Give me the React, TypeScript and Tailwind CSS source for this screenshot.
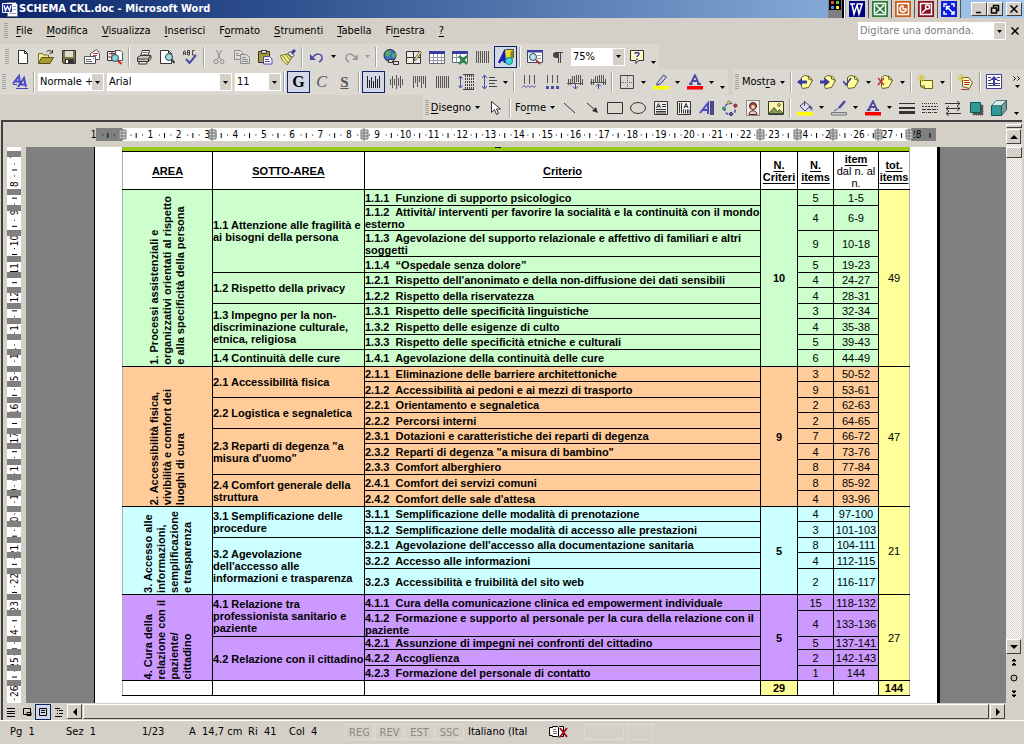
import { Fragment } from "react";
import type { ReactNode } from "react";
import clsx from "clsx";

type Criterion = { text: string; items: string; range: string; h: string; px: number };
type Sub = { label: string; criteria: Criterion[] };
type Area = { label: string; bg: string; count: string; total: string; subs: Sub[] };

// row heights, as a class for the cell and a number for the side ruler
const H = {
  13: "h-[13px]",
  15: "h-[15px]",
  16: "h-[16px]",
  17: "h-[17px]",
  25: "h-[25px]",
  26: "h-[26px]",
};

const c = (text: string, items: string, range: string, px: keyof typeof H): Criterion => ({
  text,
  items,
  range,
  h: H[px],
  px,
});

const AREAS: Area[] = [
  {
    label: "1. Processi assistenziali e\norganizzativi orientati al rispetto\ne alla specificità della persona",
    bg: "bg-[#ccffcc]",
    count: "10",
    total: "49",
    subs: [
      {
        label: "1.1 Attenzione alle fragilità e\nai bisogni della persona",
        criteria: [
          c("1.1.1  Funzione di supporto psicologico", "5", "1-5", 16),
          c("1.1.2  Attività/ interventi per favorire la socialità e la continuità con il mondo\nesterno", "4", "6-9", 25),
          c("1.1.3  Agevolazione del supporto relazionale e affettivo di familiari e altri\nsoggetti", "9", "10-18", 26),
          c("1.1.4  “Ospedale senza dolore”", "5", "19-23", 16),
        ],
      },
      {
        label: "1.2 Rispetto della privacy",
        criteria: [
          c("1.2.1  Rispetto dell'anonimato e della non-diffusione dei dati sensibili", "4", "24-27", 15),
          c("1.2.2  Rispetto della riservatezza", "4", "28-31", 16),
        ],
      },
      {
        label: "1.3 Impegno per la non-\ndiscriminazione culturale,\netnica, religiosa",
        criteria: [
          c("1.3.1  Rispetto delle specificità linguistiche", "3", "32-34", 15),
          c("1.3.2  Rispetto delle esigenze di culto", "4", "35-38", 16),
          c("1.3.3  Rispetto delle specificità etniche e culturali", "5", "39-43", 15),
        ],
      },
      {
        label: "1.4 Continuità delle cure",
        criteria: [c("1.4.1  Agevolazione della continuità delle cure", "6", "44-49", 17)],
      },
    ],
  },
  {
    label: "2. Accessibilità fisica,\nvivibilità e comfort dei\nluoghi di cura",
    bg: "bg-[#ffcc99]",
    count: "9",
    total: "47",
    subs: [
      {
        label: "2.1 Accessibilità fisica",
        criteria: [
          c("2.1.1  Eliminazione delle barriere architettoniche", "3", "50-52", 15),
          c("2.1.2  Accessibilità ai pedoni e ai mezzi di trasporto", "9", "53-61", 16),
        ],
      },
      {
        label: "2.2 Logistica e segnaletica",
        criteria: [
          c("2.2.1  Orientamento e segnaletica", "2", "62-63", 15),
          c("2.2.2  Percorsi interni", "2", "64-65", 16),
        ],
      },
      {
        label: "2.3 Reparti di degenza \"a\nmisura d'uomo\"",
        criteria: [
          c("2.3.1  Dotazioni e caratteristiche dei reparti di degenza", "7", "66-72", 15),
          c("2.3.2  Reparti di degenza \"a misura di bambino\"", "4", "73-76", 16),
          c("2.3.3  Comfort alberghiero", "8", "77-84", 15),
        ],
      },
      {
        label: "2.4 Comfort generale della\nstruttura",
        criteria: [
          c("2.4.1  Comfort dei servizi comuni", "8", "85-92", 16),
          c("2.4.2  Comfort delle sale d'attesa", "4", "93-96", 16),
        ],
      },
    ],
  },
  {
    label: "3. Accesso alle\ninformazioni,\nsemplificazione\ne trasparenza",
    bg: "bg-[#ccffff]",
    count: "5",
    total: "21",
    subs: [
      {
        label: "3.1 Semplificazione delle\nprocedure",
        criteria: [
          c("3.1.1  Semplificazione delle modalità di prenotazione", "4", "97-100", 15),
          c("3.1.2  Semplificazione delle modalità di accesso alle prestazioni", "3", "101-103", 16),
        ],
      },
      {
        label: "3.2 Agevolazione\ndell'accesso alle\ninformazioni e trasparenza",
        criteria: [
          c("3.2.1  Agevolazione dell'accesso alla documentazione sanitaria", "8", "104-111", 15),
          c("3.2.2  Accesso alle informazioni", "4", "112-115", 16),
          c("3.2.3  Accessibilità e fruibilità del sito web", "2", "116-117", 26),
        ],
      },
    ],
  },
  {
    label: "4. Cura della\nrelazione con il\npaziente/\ncittadino",
    bg: "bg-[#cc99ff]",
    count: "5",
    total: "27",
    subs: [
      {
        label: "4.1 Relazione tra\nprofessionista sanitario e\npaziente",
        criteria: [
          c("4.1.1  Cura della comunicazione clinica ed empowerment individuale", "15", "118-132", 16),
          c("4.1.2  Formazione e supporto al personale per la cura della relazione con il\npaziente", "4", "133-136", 26),
        ],
      },
      {
        label: "4.2 Relazione con il cittadino",
        criteria: [
          c("4.2.1  Assunzione di impegni nei confronti del cittadino", "5", "137-141", 13),
          c("4.2.2  Accoglienza", "2", "142-143", 16),
          c("4.2.3  Formazione del personale di contatto", "1", "144", 15),
        ],
      },
    ],
  },
];

/* ---------- icons ---------- */

const Svg = ({ children }: { children: ReactNode }) => (
  <svg viewBox="0 0 16 16" className="size-4 shrink-0" fill="none" stroke="#333" strokeWidth="1" aria-hidden="true">
    {children}
  </svg>
);

const bars = (tops: number[], bottoms: number[], color = "#222") => (
  <Svg>
    <path stroke={color} d={tops.map((t, i) => `M${i * 2 + 1.5} ${t}V${bottoms[i]}`).join("")} />
  </Svg>
);

const ALIGN = {
  start: bars([2, 6, 3, 7, 2, 5, 2], [14, 14, 14, 14, 14, 14, 14]),
  center: bars([5, 2, 5, 1, 4, 2, 5], [11, 14, 11, 15, 12, 14, 11], "#555"),
  end: bars([2, 2, 2, 2, 2, 2, 2], [14, 9, 13, 8, 14, 10, 14], "#555"),
  full: bars([2, 2, 2, 2, 2, 2, 2], [14, 14, 14, 14, 14, 14, 14], "#555"),
};

const NewDoc = <Svg><path fill="#fff" d="M3.5 1.5h6l3 3v10h-9zM9.500 1.500v3h3" /></Svg>;
const OpenDoc = (
  <Svg>
    <path fill="#f5ee8c" stroke="#77702a" d="M.5 14V4.500h4l1 1.500h5v3" />
    <path fill="#a89c2e" stroke="#554f18" d="M.5 14.500l3-6h12l-3.500 6z" />
    <path d="M8.500 3c1.500-2 4-2 5.500 0M14.500 1v3h-3" />
  </Svg>
);
const Save = (
  <Svg>
    <path fill="#7b7b45" d="M1.500 1.500h13v13h-12l-1-1z" />
    <path fill="#dedbd0" stroke="none" d="M4 2h8v6H4z" />
    <path fill="#333" stroke="none" d="M4 10h9v4H4z" />
    <path fill="#fff" stroke="none" d="M5 11h2v3H5z" />
  </Svg>
);
const Mail = (
  <Svg>
    <path fill="#fff" stroke="#555" d="M6.500 4.500l6-4 3 4v6h-9z" />
    <path stroke="#b44" d="M9 4.500h5M9 6.500h4" />
    <path fill="#fff" stroke="#555" d="M.5 7.500h11v7H.5z" />
    <path stroke="#667" d="M2 10.500h5M2 12.500h6M9 9.500h1" />
  </Svg>
);
const FindDoc = (
  <Svg>
    <path fill="#eee" d="M.5 2.500h9v9h-9z" />
    <path stroke="#833" d="M2 4.500h6M.5 8h9M5 2.500v9" />
    <path fill="#fff" stroke="#555" d="M8.500 1.500h5l2 2v8h-7z" />
    <circle cx="8" cy="9" r="3.500" fill="#8cd5da" stroke="#345" />
    <path stroke="#c22" strokeWidth="2" d="M11 12l3.500 3" />
  </Svg>
);
const Print = (
  <Svg>
    <path fill="#fff" d="M4.500 7l2-5.500h7L12 7" />
    <path stroke="#888" d="M7 3.500h5M6.500 5.500h5" />
    <path fill="#c8c5b8" d="M1.500 8.500l3-2h10l-2 3.500h-11zM1.500 8.500v4h11v-3M12.500 12.500l2.500-3v-3" />
    <path fill="#eee" d="M3.500 12.500h8l-1 2.500h-8z" />
    <path stroke="#cb3" d="M9 10.500h2" />
  </Svg>
);
const Preview = (
  <Svg>
    <path fill="#fff" d="M1.500 1.500h8l3 3v10h-11zM9.500 1.500v3h3" />
    <circle cx="10" cy="8" r="3.500" fill="#9fdede" stroke="#344" />
    <path stroke="#344" strokeWidth="2" d="M12.500 10.500l3 3.500" />
  </Svg>
);
const Spell = (
  <Svg>
    <path stroke="#444" d="M1.500 6V3l1-1.500 1 1.500v3M1.500 4.500h2M5.500 1.500V6h2V1.500h-2M5.500 3.500h2M12.500 1.500h-2V6h2" />
    <path stroke="#4b49a8" strokeWidth="2" d="M4 10l3.500 4L14 6" />
  </Svg>
);
const Cut = (
  <Svg>
    <path stroke="#8a8a8a" d="M5.500 1l4 9M10.500 1l-4 9" />
    <circle cx="5" cy="12.500" r="2" stroke="#8a8a8a" />
    <circle cx="11" cy="12.500" r="2" stroke="#8a8a8a" />
  </Svg>
);
const Copy = (
  <Svg>
    <path fill="#ddd" stroke="#8a8a8a" d="M.5 1.500h6l2 2v7h-8z" />
    <path fill="#ddd" stroke="#8a8a8a" d="M6.500 5.500h6l3 3v6h-9zM8 8.500h4M8 10.500h6M8 12.500h6M2 4.500h3M2 6.500h4" />
  </Svg>
);
const Paste = (
  <Svg>
    <path fill="#a99b35" d="M1.500 2.500h11v11h-11z" />
    <path fill="#ddd" d="M4.500 1.500h5v3h-5z" />
    <path fill="#fff" stroke="#4b49a8" d="M6.500 7.500h6l2.500 2.500v5H6.500zM8 10.500h4M8 12.500h5" />
  </Svg>
);
const Brush = (
  <Svg>
    <path fill="#f5ee8c" stroke="#77702a" d="M.5 6.500l7-1.500 4 4-4 6.500c-3-1-5-3-7-9z" />
    <path stroke="#77702a" d="M3 7l5 7M6 6l4 5" />
    <path fill="#f4f4f4" d="M8 4.500l2-2 4 4-2 2z" />
    <path stroke="#3c3aa0" strokeWidth="3" d="M12 4l3-3" />
  </Svg>
);
const Undo = <Svg><path stroke="#4b49a8" strokeWidth="1.500" d="M4 8c3-4 9-4 9 1 0 2-1 3-3 4" /><path fill="#4b49a8" stroke="none" d="M1 5v6h6z" /></Svg>;
const Redo = <Svg><path stroke="#999" strokeWidth="1.500" d="M12 8C9 4 3 4 3 9c0 2 1 3 3 4" /><path fill="#999" stroke="none" d="M15 5v6H9z" /></Svg>;
const Web = (
  <Svg>
    <circle cx="7" cy="6.500" r="6" fill="#3b73c9" stroke="#224" />
    <path fill="#59ae58" stroke="none" d="M3 3l4-2 1 3-3 4-3-2zM9 5l4-1-1 5-3-1z" />
    <path fill="#ddd" d="M5.500 10.500h5v3h-5zM10.500 12.500h5v3h-5zM9 12.500h4" />
  </Svg>
);
const Tables = (
  <Svg>
    <path fill="#eceae2" d="M.5 2.500h14v12H.5zM7.500 2.500v12M.5 8.500h14" />
    <path fill="#f3e38c" stroke="#665" d="M8 12l1-3 5-7 1.500 1.500-5 7z" />
  </Svg>
);
const InsTable = (
  <Svg>
    <path fill="#fff" stroke="#667" d="M.5 2.500h15v12H.5z" />
    <path fill="#3c3aa0" stroke="none" d="M0 2h16v3H0z" />
    <path stroke="#99a" d="M1 8.500h14M1 11.500h14M4.500 5v9M8.500 5v9M12.500 5v9" />
  </Svg>
);
const InsExcel = (
  <Svg>
    <path fill="#fff" stroke="#667" d="M.5 2.500h15v11H.5z" />
    <path fill="#3c3aa0" stroke="none" d="M0 2h16v3H0z" />
    <path stroke="#99a" d="M1 8.500h14M4.500 5v8M8.500 5v8" />
    <path stroke="#2d8a48" strokeWidth="2.500" d="M7 7l8 8M15 7l-8 8" />
  </Svg>
);
const Drawing = (
  <Svg>
    <path fill="#e9d832" stroke="#443" d="M5.500 2.500l3-2h7v8l-3 2h-7z" />
    <path fill="#8c8418" stroke="none" d="M12.500 3l3-2v7l-3 2z" />
    <path stroke="#1b1bb5" strokeWidth="2.500" d="M1 14L6 4l1 10M3 11h4" />
    <circle cx="11" cy="12" r="3.500" fill="#3fd6db" stroke="#188" />
  </Svg>
);
const MapLens = (
  <Svg>
    <path fill="#fff" stroke="#446" d="M.5 1.500h15v12H.5z" />
    <path fill="#3c3aa0" stroke="none" d="M0 1h16v2.500H0z" />
    <path stroke="#99a" d="M10 6.500h4M10 9.500h4" />
    <circle cx="6" cy="8" r="3.500" fill="#b6e6ea" stroke="#345" />
    <path stroke="#a33" strokeWidth="2" d="M9 11l4 4" />
  </Svg>
);
const Pilcrow = <Svg><path fill="#444" stroke="none" d="M8 3H6a3 3 0 000 6h2z" /><path stroke="#444" d="M8.500 3v11M10.500 3v11M7 3.500h6" /></Svg>;
const Help = (
  <Svg>
    <path fill="#ffffc4" d="M1.500 1.500h13v10h-5L7 14.500v-3H1.500z" />
    <path stroke="#3c3aa0" strokeWidth="1.500" d="M6 5c0-2 4-2 4 0 0 1.500-2 1.500-2 3M8 9.500V11" />
  </Svg>
);
const Styles = (
  <Svg>
    <path stroke="#4b49c8" strokeWidth="2" d="M1 9.500L7 2l1 8M3 7.500h4M6 13l6-9 2 9M8.500 10.500H13" />
    <path stroke="#4b49a8" d="M1 10.500h4M4 14.500h12" />
  </Svg>
);
const Spread = (
  <Svg>
    <path stroke="#444" d="M7.500 1v14M9.500 1v14M11.500 1v14M13.500 1v14M15.500 1v14" strokeDasharray="2 1" />
    <path stroke="#4b49a8" d="M2.500 2v12M.5 4.500L2.500 2l2 2.500M.5 11.500l2 2.500 2-2.500" />
    <path stroke="#444" d="M5 .5h11M5 15.500h11" />
  </Svg>
);
const Spacing = <Svg><path stroke="#4b49a8" d="M3.500 1v14M1 4l2.500-3L6 4M1 12l2.500 3L6 12" /><path stroke="#444" d="M8 3.500h6M8 6.500h8M8 9.500h6M8 12.500h8" /></Svg>;
const Numbering = <Svg><path stroke="#555" d="M3.500 1v9M8.500 1v9M13.500 1v9" /><path stroke="#4b49a8" d="M1 13.500l2-2 2 2 2-2 2 2 2-2 2 2 2-2" /></Svg>;
const Bullets = <Svg><path stroke="#555" d="M3.500 1v8M8.500 1v8M13.500 1v8" /><path fill="#4b49a8" stroke="none" d="M2 12h3v3H2zM7 12h3v3H7zM12 12h3v3h-3z" /></Svg>;
const Outdent = <Svg><path stroke="#555" d="M1.500 5v6M3.500 5v6M5.500 2v8M7.500 2v8M9.500 1v7M11.500 1v7M13.500 1v10M15.500 5v6M0 9.500h16" /><path stroke="#4b49a8" d="M8.500 10v5M6 12.500l2.500 2.500 2.500-2.500" /></Svg>;
const Indent = <Svg><path stroke="#555" d="M1.500 5v6M3.500 5v6M5.500 2v6M7.500 2v6M9.500 1v7M11.500 1v7M13.500 1v10M15.500 5v6M0 8.500h16" /><path stroke="#4b49a8" d="M8.500 10v5M6 12.500L8.500 10l2.500 2.500" /></Svg>;
const Borders = <Svg><path stroke="#444" d="M1.500 1.500h13v13h-13z" /><path stroke="#666" strokeDasharray="1 1" d="M8.500 2v12M2 8.500h12" /></Svg>;
const Highlight = (
  <Svg>
    <path fill="#c5c8e8" stroke="#446" d="M4.500 8.500l6-7.500 3 2-6 7-4 1z" />
    <path fill="#ff0" stroke="none" d="M0 12h16v3.500H0z" />
  </Svg>
);
const FontColor = <Svg><path stroke="#4b49a8" strokeWidth="1.800" d="M3.500 10L8 1l4 9M5 7h6M2 10h3.500M10 10h4" /><path fill="#f00" stroke="none" d="M0 12h16v3.500H0z" /></Svg>;

const Note = ({ mark }: { mark: ReactNode }) => (
  <Svg>
    <path fill="#ffff9c" stroke="#665f20" d="M4.500 3.500l3-2 5 1 3 4-4 7-6 1-1-2z" />
    <path stroke="#665f20" d="M11.500 2v3l4 1.500" />
    {mark}
  </Svg>
);
const Prev = <Note mark={<path fill="#3c3aa0" stroke="none" d="M0 8l5-4v2.500h5v3H5V12z" />} />;
const Next = <Note mark={<path fill="#3c3aa0" stroke="none" d="M10 8L5 4v2.500H0v3h5V12z" />} />;
const Accept = <Note mark={<path stroke="#3c3aa0" strokeWidth="1.500" d="M0 7l3 4 5-7" />} />;
const Reject = <Note mark={<path stroke="#b33" strokeWidth="1.500" d="M1 4l6 7M7 4l-6 7" />} />;
const AddNote = (
  <Svg>
    <path fill="#ffff9c" stroke="#665f20" d="M3.500 6.500h12v8h-8l-4-2z" />
    <path stroke="#665f20" d="M3.500 12h4v2.500" />
    <path stroke="#d6c53a" d="M4.500 0v8M0 4h9M2 1l5 6M7 1L2 7" />
  </Svg>
);
const Track = (
  <Svg>
    <path fill="#ffffc4" stroke="#665f20" d="M5.500 3.500h6l4 5-3 6-7-2z" />
    <path stroke="#b33" d="M7 6.500h5M7 8.500h6M7 10.500h5M4 15.500h8" />
    <path stroke="#d6c53a" d="M4 0v8M0 4h8M1 1l6 6M7 1L1 7" />
  </Svg>
);
const Pane = (
  <Svg>
    <path fill="#fff" stroke="#3c3aa0" d="M.5.5h15v14H.5z" />
    <path stroke="#446" d="M2 9.500h12M2 11.500h12M2 3.500h3M11 3.500h3M2 6.500h3M11 6.500h3" />
    <path fill="#3c3aa0" stroke="none" d="M8 2l4 4H9v5H7V6H4z" />
  </Svg>
);

const Cursor = <Svg><path fill="#fff" d="M3.500 1.500v11l3-3 2 5 2-1-2-4.500h4z" /></Svg>;
const Line = <Svg><path d="M3 3l11 10" /></Svg>;
const ArrowLine = <Svg><path d="M3 3l8 7" /><path fill="#333" stroke="none" d="M14 13l-6-2 4-4z" /></Svg>;
const Rect = <Svg><path d="M.5 2.500h15v11H.5z" /></Svg>;
const Oval = <Svg><ellipse cx="8" cy="8" rx="7.500" ry="5.500" /></Svg>;
const TextBox = <Svg><path fill="#eee" d="M1.500 1.500h13v13h-13z" /><path d="M3.500 8l2-4.500 2 4.500M4 6.500h3M9 4.500h4M9 6.500h4M3 9.500h10M3 11.500h10M3 13h10" /></Svg>;
const VTextBox = <Svg><path fill="#eee" d="M1.500 1.500h13v13h-13z" /><path d="M3.500 3v10M5.500 3v10M8 8l2-4.500 2 4.500M8.500 6.500h3M7.500 9.500v4M9.500 9.500v4M11.500 9.500v4M13 9.500v4" /></Svg>;
const WordArt = <Svg><path stroke="#4b49c8" strokeWidth="2" d="M1 13L9 3v11M4 10h5" /><path fill="#4b49a8" stroke="#446" d="M11.500 1.500h3v13h-3z" /></Svg>;
const Diagram = (
  <Svg>
    <path stroke="#4b49a8" strokeWidth="1.500" strokeDasharray="3 2" d="M3 11C2 6 5 3 8 3s6 3 5 8-8 5-10 0z" />
    <circle cx="7" cy="2.500" r="1.500" fill="#e8d850" stroke="#775" />
    <circle cx="13.500" cy="5.500" r="1.500" fill="#c33" stroke="#722" />
    <circle cx="2" cy="8.500" r="1.500" fill="#4b8" stroke="#264" />
    <circle cx="9" cy="14" r="1.500" fill="#56c" stroke="#336" />
  </Svg>
);
const Clip = (
  <Svg>
    <path fill="#f2efe8" strokeDasharray="1 1" d="M1.500.5h13v15h-13z" />
    <circle cx="8" cy="6" r="3.500" fill="#9a4a3a" stroke="#522" />
    <circle cx="8" cy="7" r="2" fill="#f2d3bd" stroke="none" />
    <path fill="#e9c9c2" stroke="#522" d="M4 14.500c0-5 8-5 8 0z" />
  </Svg>
);
const Picture = (
  <Svg>
    <path fill="#fcf7b0" d="M.5 1.500h15v13H.5z" />
    <circle cx="11" cy="5" r="1.500" fill="#d8b830" stroke="#885" />
    <path fill="#7f9f50" stroke="#553" d="M1 13.500l5-6 3.500 4 2-2 3.500 4z" />
  </Svg>
);
const Bucket = (
  <Svg>
    <path fill="#dfe4f4" stroke="#446" d="M3 6l5-4 5 4-5 5z" />
    <path stroke="#446" d="M7.500 6V1" />
    <path fill="#4b49a8" stroke="none" d="M12 5c3 1 4 3 3 6-1-2-2-3-3-3z" />
    <path fill="#ff0" stroke="none" d="M0 12h16v3.500H0z" />
  </Svg>
);
const LineColor = (
  <Svg>
    <path stroke="#4b49a8" strokeWidth="2.500" d="M8 8l6-7" />
    <path stroke="#446" d="M3 10.500c2 0 3-1 5-3" />
    <path fill="#ccc" stroke="#777" d="M.5 12.500h15v2.500H.5z" />
  </Svg>
);
const Lines = <Svg><path d="M0 3.500h16" /><path strokeWidth="2" d="M0 8h16" /><path strokeWidth="3" d="M0 12.500h16" /></Svg>;
const Dashes = <Svg><path strokeDasharray="1 1" d="M0 3.500h16" /><path strokeDasharray="2 1" d="M0 6.500h16" /><path strokeDasharray="4 1" d="M0 9.500h16" /><path strokeDasharray="3 1 1 1" d="M0 12.500h16" /></Svg>;
const Arrows = <Svg><path d="M0 3.500h15M12 1l3 2.500L12 6M1 8.500h14M4 6L1 8.500 4 11M12 6l3 2.500-3 2.500M1 13.500h15M4 11l-3 2.500L4 16" /></Svg>;
const Shadow = <Svg><path fill="#555" stroke="#555" strokeDasharray="1 1" d="M5 5h10v10H5z" /><path fill="#2f9a98" stroke="#155" d="M2.500 2.500h10v10h-10z" /></Svg>;
const Cube = (
  <Svg>
    <path fill="#2f9a98" stroke="#155" d="M.5 5.500h10v10H.5z" />
    <path fill="#d5f0ee" stroke="#577" d="M.5 5.500l5-5h10l-5 5z" />
    <path fill="#7b9e9d" stroke="#355" d="M10.500 5.500l5-5v9l-5 6z" />
  </Svg>
);

/* ---------- toolbar parts ---------- */

const Caret = ({ className }: { className?: string }) => (
  <svg viewBox="0 0 5 3" className={clsx("h-[3px] w-[5px] shrink-0", className)} aria-hidden="true">
    <path d="M0 0h5L2.500 3z" fill="currentColor" />
  </svg>
);

const Btn = ({ label, on, children }: { label: string; on?: boolean; children: ReactNode }) => (
  <button
    aria-label={label}
    className={clsx(
      "flex h-[22px] w-[23px] shrink-0 items-center justify-center",
      on && "border border-[#0a246a] bg-[#d3d8e6]",
    )}
  >
    {children}
  </button>
);

const Drop = ({ label, low, off }: { label: string; low?: boolean; off?: boolean }) => (
  <button
    aria-label={label}
    className={clsx("flex h-[22px] w-[11px] shrink-0 justify-center", low ? "items-end pb-1" : "items-center", off && "text-[#999]")}
  >
    <Caret />
  </button>
);

const Sep = () => <div className="mx-[2px] h-[20px] w-[2px] shrink-0 border-l border-[#a6a39b] bg-white" />;

const Grip = () => (
  <div className="mx-[2px] h-[16px] w-[4px] shrink-0 bg-[repeating-linear-gradient(#a6a39b_0_1px,transparent_1px_2px)]" />
);

const Combo = ({ label, value, width }: { label: string; value: string; width: string }) => (
  <div className={clsx("flex h-[18px] shrink-0 items-center bg-white pr-px", width)}>
    <select aria-label={label} className="h-full min-w-0 flex-1 appearance-none pl-[2px] text-[11px] leading-[16px]">
      <option>{value}</option>
    </select>
    <span className="flex h-[16px] w-[11px] items-center justify-center bg-[#d4d0c8]">
      <Caret />
    </span>
  </div>
);

/* ---------- title and menu ---------- */

const Shortcut = ({ label, bg, children }: { label: string; bg: string; children: ReactNode }) => (
  <button aria-label={label} className="flex h-full w-[23px] items-center justify-center border-r border-[#555] bg-[#d4d0c8]">
    <span className={clsx("flex size-4 items-center justify-center", bg)}>
      <svg viewBox="0 0 16 16" className="size-4" fill="none" stroke="#fff" strokeWidth="1.500" aria-hidden="true">
        {children}
      </svg>
    </span>
  </button>
);

const WinBtn = ({ label, d }: { label: string; d: string }) => (
  <button
    aria-label={label}
    className="flex h-[14px] w-[16px] items-center justify-center border border-t-white border-l-white border-r-[#404040] border-b-[#404040] bg-[#d4d0c8]"
  >
    <svg viewBox="0 0 10 10" className="size-[10px]" fill="none" stroke="#000" strokeWidth="1.500" aria-hidden="true">
      <path d={d} />
    </svg>
  </button>
);

const TitleBar = () => (
  <header className="flex h-[18px] items-center bg-linear-to-r from-[#0a246a] to-[#a6caf0] pr-[2px] pl-[2px]">
    <svg viewBox="0 0 16 16" className="size-4" aria-hidden="true">
      <path fill="#fff" stroke="#777" d="M5.500 1.500h8l2 2v12h-10z" />
      <path stroke="#99b" d="M11 5.500h3M11 8.500h3M7 12.500h7" />
      <path fill="#22319c" stroke="#fff" d="M.5 2.500h10v9H.5z" />
      <path fill="none" stroke="#fff" strokeWidth="1.300" d="M2 4.500l1.500 5 2-4 2 4 1.500-5" />
    </svg>
    <h1 className="ml-px flex-1 font-bold text-white">SCHEMA CKL.doc - Microsoft Word</h1>
    <div className="mr-[10px] flex h-full">
      <div className="w-[14px] bg-[#808080]">
        <svg viewBox="0 0 12 10" className="ml-px h-[10px] w-[12px]" aria-hidden="true">
          <path fill="#000" d="M0 0h12v10H0z" />
          <path fill="#e44" d="M2 1h3v3H2z" />
          <path fill="#4c4" d="M7 1h3v3H7z" />
          <path fill="#48f" d="M2 6h3v3H2z" />
          <path fill="#fd3" d="M7 6h3v3H7z" />
        </svg>
      </div>
      <div className="mr-px w-[3px] border-r border-white bg-black" />
      <Shortcut label="Word" bg="bg-[#000080]"><path d="M1 3h5M8 3h6M3 3l2 10 3-9 2 9 3-10" /></Shortcut>
      <Shortcut label="Excel" bg="bg-[#2d7d3e]"><path d="M2.500 2.500h11v11h-11zM4 4l8 8M12 4l-8 8" /></Shortcut>
      <Shortcut label="PowerPoint" bg="bg-[#cf5a1c]"><path d="M2.500 2.500h11v11h-11z" /><path d="M11 8a3 3 0 11-3-3v3z" /></Shortcut>
      <Shortcut label="Access" bg="bg-[#8a1020]"><path d="M2.500 2.500h11v11h-11z" /><circle cx="9.500" cy="6" r="2" /><path d="M8 8l-4 4" /></Shortcut>
      <Shortcut label="Schermo intero" bg="bg-[#0b1fe0]"><path d="M3 6V3h3M10 13h3v-3M3 10v3h3M10 3h3v3M6 6l6 6M5.500 9V5.500H9" /></Shortcut>
    </div>
    <div className="flex">
      <WinBtn label="Riduci a icona" d="M2 8.500h5" />
      <WinBtn label="Ripristina" d="M3.500 3.500v-2h5v5h-2M1.500 4h5v5h-5z" />
    </div>
    <div className="ml-[3px]">
      <WinBtn label="Chiudi" d="M1.500 1.500l7 7M8.500 1.500l-7 7" />
    </div>
  </header>
);

const MENU: [string, string, string][] = [
  ["", "F", "ile"],
  ["", "M", "odifica"],
  ["", "V", "isualizza"],
  ["", "I", "nserisci"],
  ["F", "o", "rmato"],
  ["", "S", "trumenti"],
  ["", "T", "abella"],
  ["Fi", "n", "estra"],
  ["", "?", ""],
];

const MenuBar = () => (
  <nav className="flex h-[26px] items-center pr-[4px] pl-[2px]">
    <Grip />
    <div className="ml-[6px] flex flex-1 gap-[14px]">
      {MENU.map(([a, key, b]) => (
        <button key={a + key + b}>
          {a}
          <u className="underline-offset-2">{key}</u>
          {b}
        </button>
      ))}
    </div>
    <div className="flex h-[18px] w-[148px] items-center bg-white pr-px">
      <input
        aria-label="Digitare una domanda"
        placeholder="Digitare una domanda."
        className="min-w-0 flex-1 pl-[2px] text-[11px] placeholder:text-[#808080]"
      />
      <button aria-label="Domande recenti" className="flex h-[16px] w-[11px] items-center justify-center bg-[#d4d0c8]">
        <Caret />
      </button>
    </div>
    <button aria-label="Chiudi documento" className="ml-[4px] flex size-[10px] items-center justify-center">
      <svg viewBox="0 0 8 8" className="size-2" stroke="#000" strokeWidth="1.500" aria-hidden="true">
        <path d="M.5.5l7 7M7.500.5l-7 7" />
      </svg>
    </button>
  </nav>
);

const StandardBar = () => (
  <div className="flex h-[25px] items-center self-start bg-[#dbd8d1] pl-[3px]">
    <Grip />
    <Btn label="Nuovo">{NewDoc}</Btn>
    <Btn label="Apri">{OpenDoc}</Btn>
    <Btn label="Salva">{Save}</Btn>
    <Btn label="Posta elettronica">{Mail}</Btn>
    <Btn label="Cerca">{FindDoc}</Btn>
    <Sep />
    <Btn label="Stampa">{Print}</Btn>
    <Btn label="Anteprima">{Preview}</Btn>
    <Btn label="Controllo ortografia">{Spell}</Btn>
    <Sep />
    <Btn label="Taglia">{Cut}</Btn>
    <Btn label="Copia">{Copy}</Btn>
    <Btn label="Incolla">{Paste}</Btn>
    <Btn label="Copia formato">{Brush}</Btn>
    <Sep />
    <Btn label="Annulla">{Undo}</Btn>
    <Drop label="Elenco annulla" />
    <Btn label="Ripristina">{Redo}</Btn>
    <Drop label="Elenco ripristina" off />
    <Sep />
    <Btn label="Collegamento">{Web}</Btn>
    <Btn label="Tabelle e bordi">{Tables}</Btn>
    <Btn label="Inserisci tabella">{InsTable}</Btn>
    <Btn label="Foglio di lavoro">{InsExcel}</Btn>
    <Btn label="Colonne">{ALIGN.full}</Btn>
    <Btn label="Disegno" on>{Drawing}</Btn>
    <Sep />
    <Btn label="Mappa documento">{MapLens}</Btn>
    <Btn label="Mostra/Nascondi">{Pilcrow}</Btn>
    <div className="ml-[2px]">
      <Combo label="Zoom" value="75%" width="w-[54px]" />
    </div>
    <Btn label="Guida">{Help}</Btn>
    <Drop label="Opzioni barra Standard" low />
  </div>
);

const FormatBar = () => (
  <div className="flex h-[26px] items-center bg-[#dbd8d1]">
    <Grip />
    <Btn label="Stili e formattazione">{Styles}</Btn>
    <Sep />
    <div className="ml-px flex gap-[3px]">
      <Combo label="Stile" value="Normale +" width="w-[66px]" />
      <Combo label="Tipo di carattere" value="Arial" width="w-[125px]" />
      <Combo label="Dimensione" value="11" width="w-[46px]" />
    </div>
    <Sep />
    <Btn label="Grassetto" on>
      <span className="font-['Liberation_Serif',serif] text-[16px] leading-4 font-bold">G</span>
    </Btn>
    <Btn label="Corsivo">
      <span className="font-['Liberation_Serif',serif] text-[16px] leading-4 text-[#555] italic">C</span>
    </Btn>
    <Btn label="Sottolineato">
      <span className="font-['Liberation_Serif',serif] text-[15px] leading-4 font-bold text-[#555] underline">S</span>
    </Btn>
    <Sep />
    <Btn label="Allinea in basso" on>{ALIGN.start}</Btn>
    <Btn label="Centra">{ALIGN.center}</Btn>
    <Btn label="Allinea in alto">{ALIGN.end}</Btn>
    <Btn label="Giustifica">{ALIGN.full}</Btn>
    <Btn label="Distribuisci">{Spread}</Btn>
    <Btn label="Interlinea">{Spacing}</Btn>
    <Drop label="Valori interlinea" />
    <Sep />
    <Btn label="Elenco numerato">{Numbering}</Btn>
    <Btn label="Elenco puntato">{Bullets}</Btn>
    <Btn label="Riduci rientro">{Outdent}</Btn>
    <Btn label="Aumenta rientro">{Indent}</Btn>
    <Sep />
    <Btn label="Bordi">{Borders}</Btn>
    <Drop label="Tipi di bordo" />
    <Btn label="Evidenzia">{Highlight}</Btn>
    <Drop label="Colori evidenziatore" />
    <Btn label="Colore carattere">{FontColor}</Btn>
    <Drop label="Colori carattere" />
    <Drop label="Opzioni barra Formattazione" low />
    <div className="w-[5px] self-stretch bg-[#d4d0c8]" />
    <Grip />
    <button className="ml-px flex items-center gap-[4px]">
      <span>
        Most<u className="underline-offset-2">r</u>a
      </span>
      <Caret />
    </button>
    <div className="ml-[3px]">
      <Sep />
    </div>
    <Btn label="Precedente">{Prev}</Btn>
    <Btn label="Successiva">{Next}</Btn>
    <Btn label="Accetta">{Accept}</Btn>
    <Drop label="Opzioni accetta" />
    <Btn label="Rifiuta">{Reject}</Btn>
    <Drop label="Opzioni rifiuta" />
    <Sep />
    <Btn label="Inserisci commento">{AddNote}</Btn>
    <Drop label="Opzioni commento" />
    <Sep />
    <Btn label="Revisioni">{Track}</Btn>
    <Sep />
    <Btn label="Riquadro revisioni">{Pane}</Btn>
    <button aria-label="Altri pulsanti" className="ml-auto flex h-[22px] w-[14px] shrink-0 flex-col items-center justify-center gap-[4px]">
      <svg viewBox="0 0 8 5" className="h-[5px] w-2" fill="none" stroke="#000" aria-hidden="true">
        <path d="M.5.5l2 2-2 2M4.500.5l2 2-2 2" />
      </svg>
      <Caret />
    </button>
  </div>
);

const DrawBar = () => (
  <div className="flex h-[25px] items-center self-end bg-[#dbd8d1]">
    <Grip />
    <button className="flex items-center gap-[4px]">
      <span>
        <u className="underline-offset-2">D</u>isegno
      </span>
      <Caret />
    </button>
    <div className="ml-[4px] flex items-center">
      <Btn label="Seleziona oggetti">{Cursor}</Btn>
      <Sep />
    </div>
    <button className="mr-[2px] ml-[2px] flex items-center gap-[4px]">
      <span>
        Fo<u className="underline-offset-2">r</u>me
      </span>
      <Caret />
    </button>
    <Btn label="Linea">{Line}</Btn>
    <Btn label="Freccia">{ArrowLine}</Btn>
    <Btn label="Rettangolo">{Rect}</Btn>
    <Btn label="Ovale">{Oval}</Btn>
    <Btn label="Casella di testo">{TextBox}</Btn>
    <Btn label="Testo verticale">{VTextBox}</Btn>
    <Btn label="WordArt">{WordArt}</Btn>
    <Btn label="Diagramma">{Diagram}</Btn>
    <Btn label="ClipArt">{Clip}</Btn>
    <Btn label="Immagine">{Picture}</Btn>
    <Sep />
    <Btn label="Colore riempimento">{Bucket}</Btn>
    <Drop label="Colori riempimento" />
    <Btn label="Colore linea">{LineColor}</Btn>
    <Drop label="Colori linea" />
    <Btn label="Colore testo">{FontColor}</Btn>
    <Drop label="Colori testo" />
    <Btn label="Stile linea">{Lines}</Btn>
    <Btn label="Stile tratteggio">{Dashes}</Btn>
    <Btn label="Stile freccia">{Arrows}</Btn>
    <Btn label="Ombreggiatura">{Shadow}</Btn>
    <Btn label="3D">{Cube}</Btn>
    <div className="mr-[2px] ml-px">
      <Drop label="Opzioni barra Disegno" low />
    </div>
  </div>
);

/* ---------- rulers ---------- */

const CM = 28.35;
const COLS = [28, 118, 270, 666, 703, 739, 784, 815];

const TopRuler = () => (
  <div className="flex h-[25px] items-center justify-center pl-[25px]">
    <svg viewBox="0 0 846 14" className="h-[14px] w-[846px] shrink-0 overflow-visible text-[10px]" aria-hidden="true">
      <path fill="#808080" d="M2 0h840v13H2z" />
      <path fill="#fff" d="M28 0h789v13H28z" />
      {Array.from({ length: 30 }, (_, n) => {
        const x = 28 + (n - 1) * CM;
        return (
          <Fragment key={n}>
            {n !== 1 && (
              <text x={x} y="10" textAnchor="middle">
                {Math.abs(n - 1)}
              </text>
            )}
            <path d={`M${x + CM / 2} 5v5`} stroke="#000" />
            {n < 29 && <path d={`M${x + 8.500} 7h1M${x + 20} 7h1`} stroke="#000" />}
          </Fragment>
        );
      })}
      {COLS.map((x) => (
        <path key={x} d={`M${x - 3} 2h7v9h-7zM${x} 0v13M${x - 3} 5h7M${x - 3} 8h7`} fill="#ccc" stroke="#777" />
      ))}
    </svg>
  </div>
);

const ROWS = [38, ...AREAS.flatMap((a) => a.subs.flatMap((s) => s.criteria.map((r) => r.px))), 15];
const LINES = ROWS.reduce<number[]>((ys, h) => [...ys, ys[ys.length - 1] + h], [4]);

const SideRuler = () => (
  <svg className="ml-[4px] h-full w-[14px] shrink-0 bg-white text-[10px]" aria-hidden="true">
    {Array.from({ length: 20 }, (_, i) => {
      const y = 9 + i * 28.17;
      return (
        <Fragment key={i}>
          <text transform={`translate(11 ${y}) rotate(-90)`} textAnchor="middle">
            {i + 7}
          </text>
          <path d={`M5 ${y + 14}h5M7 ${y + 8}h1M7 ${y + 20}h1`} stroke="#000" />
        </Fragment>
      );
    })}
    {LINES.slice(0, -1).map((y) => (
      <rect key={y} x="0" y={y} width="14" height="6" fill="#808080" />
    ))}
  </svg>
);

/* ---------- document ---------- */

const AreaRows = ({ area }: { area: Area }) => {
  const span = area.subs.reduce((n, s) => n + s.criteria.length, 0);
  return (
    <tbody className={area.bg}>
      {area.subs.map((sub, si) =>
        sub.criteria.map((row, ri) => {
          const first = si === 0 && ri === 0;
          return (
            <tr key={row.text}>
              {first && (
                <th rowSpan={span} scope="rowgroup" className="border border-black border-l-[#b0b0b0] p-0 pb-px align-bottom">
                  <div className="flex justify-center">
                    <span className="rotate-180 text-left leading-[13px] whitespace-pre [writing-mode:vertical-rl]">
                      {area.label}
                    </span>
                  </div>
                </th>
              )}
              {ri === 0 && (
                <th rowSpan={sub.criteria.length} className="border border-black p-0 text-left whitespace-pre">
                  {sub.label}
                </th>
              )}
              <td className={clsx("border border-black p-0 font-bold whitespace-pre", row.h)}>{row.text}</td>
              {first && (
                <td rowSpan={span} className="border border-black p-0 text-center font-bold">
                  {area.count}
                </td>
              )}
              <td className="border border-black p-0 text-center">{row.items}</td>
              <td className="border border-black p-0 text-center">{row.range}</td>
              {first && (
                <td rowSpan={span} className="border border-black border-r-[#b0b0b0] bg-[#ffff99] p-0 text-center">
                  {area.total}
                </td>
              )}
            </tr>
          );
        }),
      )}
    </tbody>
  );
};

const HEAD = "border border-black p-0 underline underline-offset-2";

const Page = () => (
  <div className="w-[846px] shrink-0 border-r-[3px] border-l border-black bg-white pl-[27px]">
    <div className="h-[4px] w-[788px] bg-[#99cc1a] pl-[373px]">
      <div className="h-px w-[6px] bg-black" />
    </div>
    <table className="w-[788px] table-fixed border-collapse font-['Liberation_Sans',Arial,sans-serif] text-[11px] leading-[12px]">
      <colgroup>
        <col className="w-[90px]" />
        <col className="w-[152px]" />
        <col />
        <col className="w-[37px]" />
        <col className="w-[36px]" />
        <col className="w-[45px]" />
        <col className="w-[31px]" />
      </colgroup>
      <thead>
        <tr className="h-[38px]">
          <th className={clsx(HEAD, "border-l-[#b0b0b0]")}>AREA</th>
          <th className={HEAD}>SOTTO-AREA</th>
          <th className={HEAD}>Criterio</th>
          <th className={HEAD}>N. Criteri</th>
          <th className={HEAD}>N. items</th>
          <th className="border border-black p-0">
            <span className="underline underline-offset-2">item</span>
            <br />
            <span className="font-normal">dal n. al n.</span>
          </th>
          <th className={clsx(HEAD, "border-r-[#b0b0b0]")}>tot. items</th>
        </tr>
      </thead>
      {AREAS.map((area) => (
        <AreaRows key={area.label} area={area} />
      ))}
      <tfoot>
        <tr className="h-[15px] text-center font-bold">
          <td className="border border-black border-l-[#b0b0b0] p-0" />
          <td className="border border-black p-0" />
          <td className="border border-black p-0" />
          <td className="border border-black bg-[#ffff99] p-0">29</td>
          <td className="border border-black p-0" />
          <td className="border border-black p-0" />
          <td className="border border-black border-r-[#b0b0b0] bg-[#ffff99] p-0">144</td>
        </tr>
      </tfoot>
    </table>
  </div>
);

const RAISED = "border border-t-white border-l-white border-r-[#404040] border-b-[#404040] bg-[#d4d0c8]";

const ScrollBtn = ({ label, d }: { label: string; d: string }) => (
  <button aria-label={label} className={clsx("flex size-[15px] shrink-0 items-center justify-center", RAISED)}>
    <svg viewBox="0 0 8 8" className="size-2" aria-hidden="true">
      <path d={d} />
    </svg>
  </button>
);

const PlainBtn = ({ label, children }: { label: string; children: ReactNode }) => (
  <button aria-label={label} className="flex h-4 w-full items-center justify-center">
    <svg viewBox="0 0 10 10" className="size-[10px]" fill="none" stroke="#000" aria-hidden="true">
      {children}
    </svg>
  </button>
);

const VScroll = () => (
  <div className="flex w-[16px] shrink-0 flex-col pt-[2px]">
    <div className={clsx("mb-px h-[4px]", RAISED)} />
    <ScrollBtn label="Scorri in alto" d="M0 6h8L4 2z" />
    <div className="flex-1 bg-[repeating-conic-gradient(#fff_0_25%,#d4d0c8_0_50%)] bg-size-[2px_2px]">
      <div className={clsx("mt-[3px] h-[11px]", RAISED)} />
    </div>
    <ScrollBtn label="Scorri in basso" d="M0 2h8L4 6z" />
    <div className="flex h-[49px] flex-col">
      <PlainBtn label="Pagina precedente"><path fill="#000" d="M3 4l2-2 2 2zM3 8l2-2 2 2z" /></PlainBtn>
      <PlainBtn label="Seleziona oggetto"><circle cx="5" cy="5" r="3" fill="#bbb" /></PlainBtn>
      <PlainBtn label="Pagina successiva"><path fill="#000" d="M3 2l2 2 2-2zM3 6l2 2 2-2z" /></PlainBtn>
    </div>
  </div>
);

const ViewBtn = ({ label, d, on }: { label: string; d: string; on?: boolean }) => (
  <button
    aria-label={label}
    className={clsx("flex size-4 items-center justify-center", on && "border border-[#0a246a] bg-[#d3d8e6]")}
  >
    <svg viewBox="0 0 10 10" className="size-[10px] shrink-0" fill="none" stroke="#000" aria-hidden="true">
      <path d={d} />
    </svg>
  </button>
);

const BottomBar = () => (
  <div className="flex h-[17px] items-center pr-[17px]">
    <ViewBtn label="Normale" d="M1 1.500h8M1 4.500h8M1 6.500h8M1 9.500h8" />
    <ViewBtn label="Layout Web" d="M1.500 1.500h7v6h-7zM5 5.500h4v3H5z" />
    <ViewBtn label="Layout di stampa" on d="M1.500 1.500h7v7h-7zM3 3.500h4M3 5.500h4" />
    <ViewBtn label="Struttura" d="M1 1.500h5M3 3.500h1M5 3.500h4M3 6.500h1M5 6.500h4M1 9.500h7" />
    <ScrollBtn label="Scorri a sinistra" d="M6 0v8L2 4z" />
    <div className={clsx("mx-px h-[15px] flex-1", RAISED)} />
    <ScrollBtn label="Scorri a destra" d="M2 0v8l4-4z" />
  </div>
);

const StatusBar = () => (
  <footer className="flex h-[24px] items-center border-t border-white pb-px pl-[10px]">
    <span className="w-[56px]">Pg&nbsp; 1</span>
    <span className="w-[76px]">Sez&nbsp; 1</span>
    <span className="w-[47px]">1/23</span>
    <span className="w-[59px] whitespace-nowrap">A&nbsp; 14,7 cm</span>
    <span className="w-[41px]">Ri&nbsp; 41</span>
    <span className="w-[56px]">Col&nbsp; 4</span>
    {["REG", "REV", "EST", "SSC"].map((flag) => (
      <span key={flag} className="mr-px h-[16px] w-[29px] border border-[#dedbd4] text-center leading-[15px] text-[#8c8980]">
        {flag}
      </span>
    ))}
    <span className="ml-[3px] w-[80px] whitespace-nowrap">Italiano (Ital</span>
    <svg viewBox="0 0 22 14" className="h-[14px] w-[22px]" fill="#fff" stroke="#000" aria-hidden="true">
      <path d="M1.500 2.500h3v-1h5l1 1 1-1h4v10h-4l-1 1-1-1h-5v-1h-3zM10.500 2.500v9" />
      <path stroke="#777" d="M5 4.500h3M5 6.500h4M5 8.500h4" />
      <path stroke="#a01020" strokeWidth="2" d="M12 3l7 9M19 3l-7 9" />
    </svg>
    <span className="ml-[14px] h-[16px] w-[40px] border border-[#dedbd4]" />
    <span className="ml-[3px] h-[16px] w-[26px] border border-[#dedbd4]" />
  </footer>
);

export default function App() {
  return (
    <div className="flex h-screen flex-col overflow-hidden bg-[#d4d0c8] font-['DejaVu_Sans_Condensed',Tahoma,'DejaVu_Sans',sans-serif] text-[11px] leading-[14px] text-black">
      <TitleBar />
      <MenuBar />
      <StandardBar />
      <FormatBar />
      <DrawBar />
      <main className="mr-[2px] ml-px flex min-h-0 flex-1 flex-col border-t-2 border-l-2 border-[#404040]">
        <div className="flex min-h-0 flex-1">
          <div className="flex min-w-0 flex-1 flex-col">
            <TopRuler />
            <div className="flex min-h-0 flex-1">
              <SideRuler />
              <div className="ml-[5px] flex min-w-0 flex-1 justify-center overflow-hidden bg-[#808080] pl-[2px]">
                <Page />
              </div>
            </div>
          </div>
          <VScroll />
        </div>
        <BottomBar />
      </main>
      <StatusBar />
    </div>
  );
}
